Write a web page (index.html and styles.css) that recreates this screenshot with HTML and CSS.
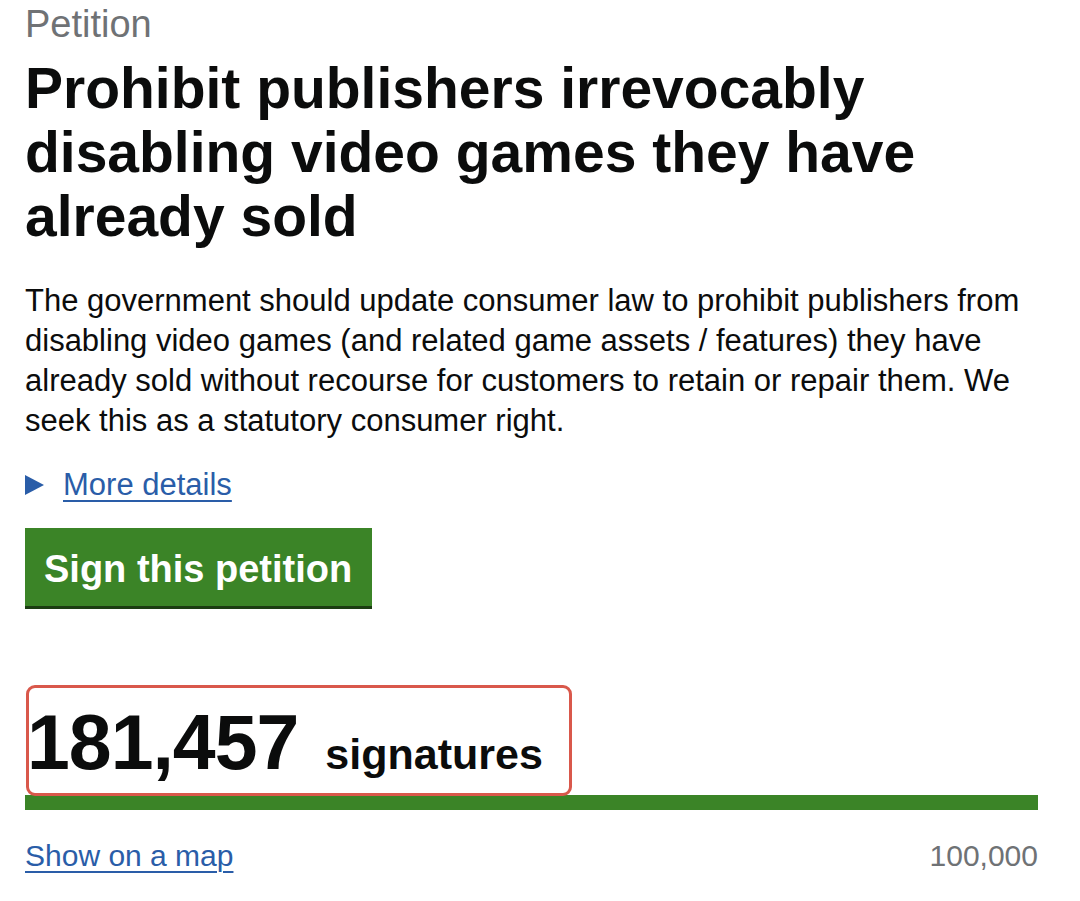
FILE: index.html
```html
<!DOCTYPE html>
<html lang="en">
<head>
<meta charset="utf-8">
<title>Petition</title>
<link rel="stylesheet" href="styles.css">
</head>
<body>
<main class="page">
  <span class="caption">Petition</span>
  <h1 class="title">Prohibit publishers irrevocably disabling video games they have already sold</h1>
  <p class="summary">The government should update consumer law to prohibit publishers from disabling video games (and related game assets / features) they have already sold without recourse for customers to retain or repair them. We seek this as a statutory consumer right.</p>
  <div class="details">
    <span class="arrow"></span>
    <a class="link" href="#">More details</a>
  </div>
  <a class="button" href="#">Sign this petition</a>
  <div class="count-wrap">
    <p class="count"><span class="number">181,457</span> <span class="label">signatures</span></p>
    <span class="highlight"></span>
  </div>
  <div class="progress"><div class="progress-fill" style="width:100%"></div></div>
  <div class="foot">
    <a class="link map" href="#">Show on a map</a>
    <span class="target">100,000</span>
  </div>
</main>
</body>
</html>
```
FILE: styles.css
```css
* { box-sizing: border-box; }
html, body { margin: 0; padding: 0; background: #fff; }
body {
  font-family: "Liberation Sans", Arial, sans-serif;
  color: #0b0c0c;
}
.page {
  width: 1080px;
  padding: 0 42px 0 25px;
  display: flex;
  flex-direction: column;
}
.caption {
  display: block;
  font-size: 38px;
  line-height: 44px;
  color: #6f7275;
  margin-top: 2px;
}
.title {
  margin: 10px 0 0;
  font-size: 57px;
  line-height: 64px;
  font-weight: 700;
}
.summary {
  margin: 33px 0 0;
  font-size: 31px;
  line-height: 40px;
}
.details {
  display: flex;
  align-items: center;
  margin-top: 24px;
  height: 40px;
}
.arrow {
  width: 0;
  height: 0;
  border-top: 10.5px solid transparent;
  border-bottom: 10.5px solid transparent;
  border-left: 19px solid #2a5da8;
  margin-right: 19px;
}
.link {
  color: #2a5da8;
  text-decoration: underline;
  text-decoration-thickness: 2px;
  text-underline-offset: 5px;
  font-size: 31px;
}
.button {
  align-self: flex-start;
  margin-top: 23px;
  background: #3b8427;
  color: #fff;
  font-weight: 700;
  font-size: 38px;
  line-height: 44px;
  padding: 19px 20px 15px 19px;
  text-decoration: none;
  box-shadow: 0 3px 0 #1c3d12;
}
.count-wrap {
  position: relative;
  margin-top: 79px;
  height: 110px;
}
.count {
  margin: 0;
  display: flex;
  align-items: baseline;
  padding-top: 17px;
  line-height: 80px;
}
.number {
  font-size: 77px;
  font-weight: 700;
  letter-spacing: -1px;
  margin-left: 2px;
}
.label {
  font-size: 43px;
  font-weight: 700;
  margin-left: 27px;
}
.highlight {
  position: absolute;
  left: 1px;
  top: 0;
  width: 546px;
  height: 111px;
  border: 3px solid #d9584b;
  border-radius: 9px;
}
.progress {
  height: 15px;
  background: #dcdcdc;
}
.progress-fill {
  height: 100%;
  background: #3b8427;
}
.foot {
  display: flex;
  justify-content: space-between;
  align-items: baseline;
  margin-top: 29px;
}
.map {
  font-size: 30px;
}
.target {
  font-size: 30px;
  color: #6f7275;
}
```
